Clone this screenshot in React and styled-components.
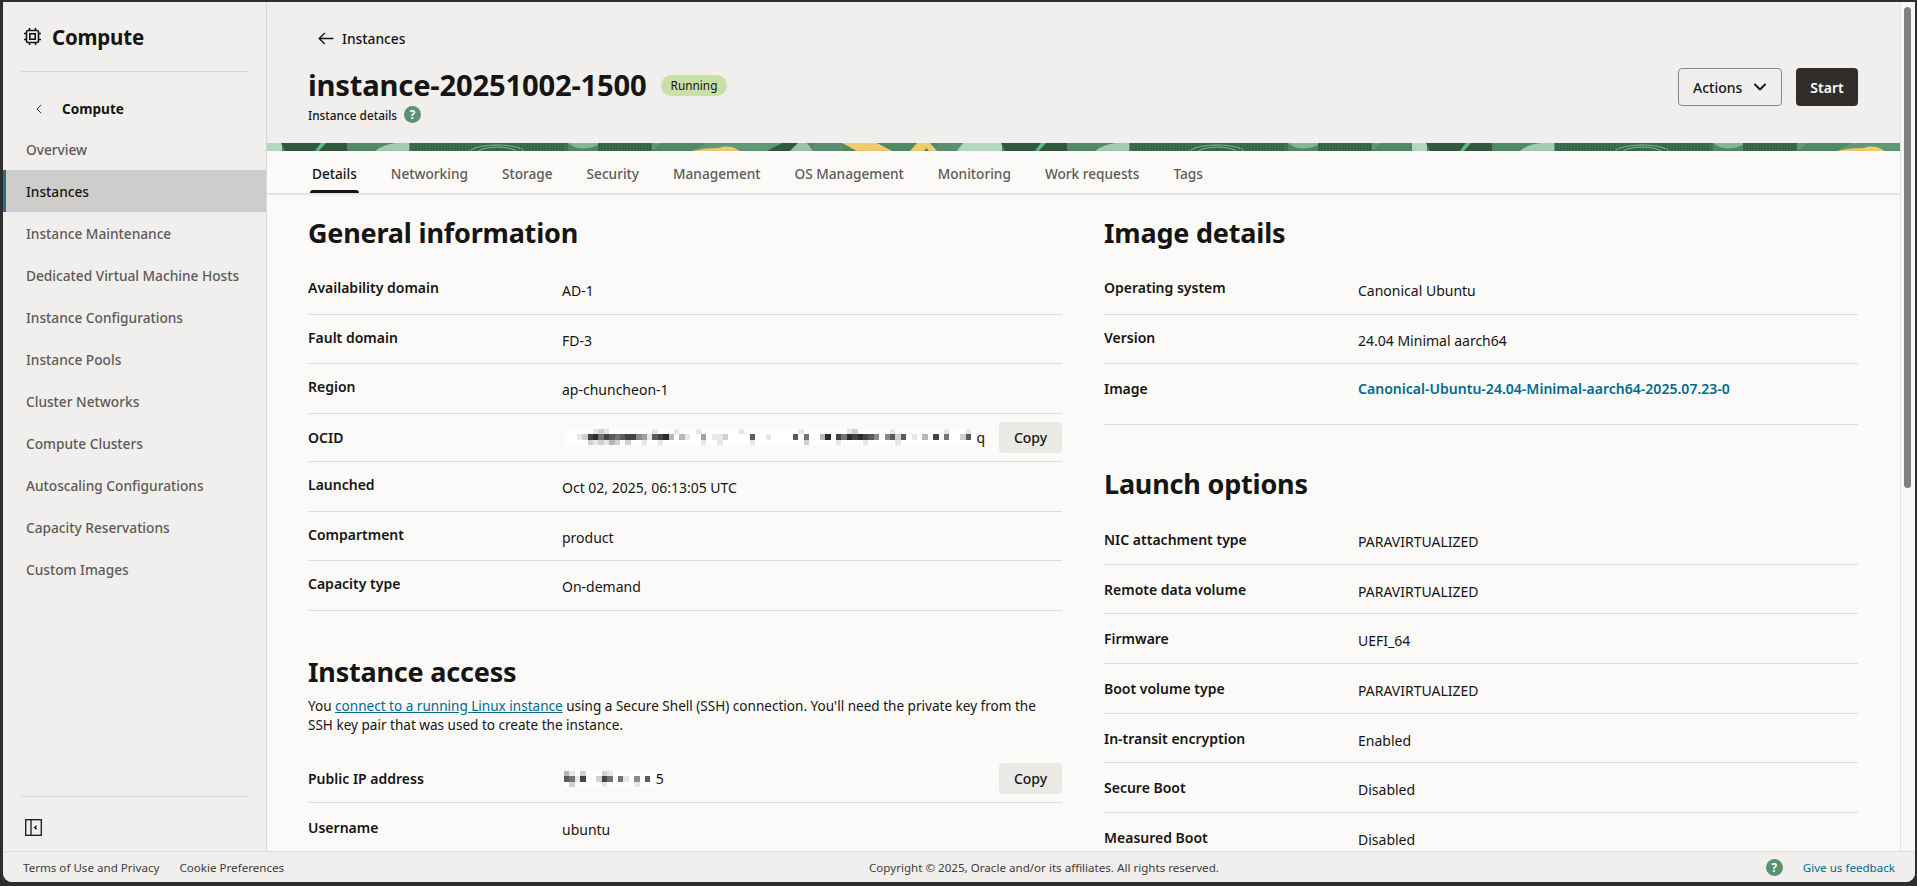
import React from "react";
import styled, { createGlobalStyle } from "styled-components";
import { ChevronDown, ChevronLeft } from "lucide-react";

const GlobalStyle = createGlobalStyle`
  html, body {
    margin: 0;
    height: 100%;
    overflow: hidden;
    background: #2f2e2c;
  }
  body {
    font-family: "Noto Sans", "Open Sans", sans-serif;
    color: #161513;
  }
  * {
    box-sizing: border-box;
  }
`;

const Frame = styled.div`
  width: 1917px;
  height: 886px;
  padding: 2px 2px 4px 3px;
  background: #2f2e2c;
`;

const Window = styled.div`
  height: 100%;
  display: flex;
  flex-direction: column;
  overflow: hidden;
  border-radius: 0 0 9px 9px;
  background: #f1efed;
`;

const Body = styled.div`
  flex: 1;
  min-height: 0;
  display: flex;
`;

const Sidebar = styled.aside`
  width: 264px;
  flex: none;
  display: flex;
  flex-direction: column;
  border-right: 1px solid #d9d7d4;
  background: #f1efed;
`;

const SideHeader = styled.div`
  height: 70px;
  margin: 0 18px;
  display: flex;
  align-items: center;
  gap: 10px;
  padding-left: 2px;
  border-bottom: 1px solid #d9d7d4;
`;

const SideTitle = styled.h1`
  margin: 0;
  font-size: 20.5px;
  font-weight: 700;
  letter-spacing: -0.2px;
`;

const BackRow = styled.div`
  height: 56px;
  padding: 17px 0 0 28px;
  display: flex;
  align-items: center;
  gap: 15px;
  font-size: 13.6px;
  font-weight: 700;
`;

const NavList = styled.nav`
  flex: 1;
`;

const NavItem = styled.div`
  height: 42px;
  display: flex;
  align-items: center;
  padding-left: ${(p) => (p.$active ? "20px" : "23px")};
  font-size: 13.7px;
  font-weight: 500;
  color: ${(p) => (p.$active ? "#161513" : "#5d5a57")};
  background: ${(p) => (p.$active ? "#cfcdcb" : "transparent")};
  border-left: ${(p) => (p.$active ? "3px solid #276f86" : "none")};
`;

const SideFooter = styled.div`
  margin: 0 18px;
  height: 55px;
  padding: 22px 0 0 4px;
  border-top: 1px solid #d9d7d4;
  line-height: 0;
`;

const Main = styled.main`
  flex: 1;
  min-width: 0;
  display: flex;
  flex-direction: column;
  overflow: hidden;
  background: #fbfaf8;
`;

const PageHeader = styled.header`
  height: 141px;
  flex: none;
  padding: 26px 42px 0 41px;
  display: flex;
  justify-content: space-between;
  background: #f1efed;
`;

const Crumb = styled.div`
  height: 20px;
  padding-left: 10px;
  display: flex;
  align-items: center;
  gap: 8px;
  font-size: 13.8px;
  font-weight: 500;
`;

const TitleRow = styled.div`
  margin-top: 16px;
  display: flex;
  align-items: center;
  gap: 14px;
`;

const PageTitle = styled.h2`
  margin: 0;
  font-size: 29.2px;
  line-height: 42px;
  font-weight: 700;
  letter-spacing: -0.2px;
`;

const Badge = styled.span`
  height: 21px;
  padding: 0 10px;
  display: inline-flex;
  align-items: center;
  border-radius: 11px;
  background: #c9dfa8;
  font-size: 11.8px;
`;

const SubTitle = styled.div`
  display: flex;
  align-items: center;
  gap: 7px;
  font-size: 11.8px;
  font-weight: 500;
`;

const HelpDot = styled.span`
  width: 17px;
  height: 17px;
  display: inline-flex;
  align-items: center;
  justify-content: center;
  border-radius: 50%;
  background: #5d9173;
  color: #fff;
  font-size: 11.5px;
  font-weight: 700;
`;

const HeaderActions = styled.div`
  margin-top: 40px;
  display: flex;
  gap: 14px;
`;

const ActionsButton = styled.button`
  width: 104px;
  height: 38px;
  padding: 0 11px 0 14px;
  display: flex;
  align-items: center;
  justify-content: space-between;
  border: 1px solid #8b8987;
  border-radius: 4px;
  background: transparent;
  color: #161513;
  font: 500 14px "Noto Sans", sans-serif;
`;

const StartButton = styled.button`
  width: 62px;
  height: 38px;
  border: 0;
  border-radius: 4px;
  background: #312d2a;
  color: #fff;
  font: 600 14px "Noto Sans", sans-serif;
`;

const BannerStrip = styled.svg`
  display: block;
  flex: none;
  width: 100%;
  height: 8px;
`;

const TabBar = styled.div`
  height: 42px;
  flex: none;
  padding-left: 45px;
  display: flex;
  gap: 34px;
  position: relative;
  z-index: 1;
  background: #fbfaf8;
  box-shadow: 0 1px 3px rgba(0, 0, 0, 0.18);
`;

const Tab = styled.div`
  position: relative;
  height: 100%;
  padding-top: 2px;
  display: flex;
  align-items: center;
  font-size: 13.65px;
  font-weight: 500;
  color: ${(p) => (p.$active ? "#161513" : "#5d5a57")};

  &::after {
    content: "";
    display: ${(p) => (p.$active ? "block" : "none")};
    position: absolute;
    left: -2px;
    right: -2px;
    bottom: 0;
    height: 3px;
    border-radius: 3px 3px 0 0;
    background: #161513;
  }
`;

const Columns = styled.div`
  flex: 1;
  min-height: 0;
  overflow: hidden;
  padding: 21px 42px 0 41px;
  display: grid;
  grid-template-columns: 754px 754px;
  column-gap: 42px;
`;

const Heading = styled.h3`
  margin: ${(p) => p.$gap || 0}px 0 ${(p) => p.$after || 13}px;
  height: 38px;
  font-size: 27px;
  line-height: 38px;
  font-weight: 700;
  letter-spacing: -0.2px;
`;

const Row = styled.div`
  height: ${(p) => (p.$copy ? "48px" : p.$tall ? "60.6px" : "49.7px")};
  padding-top: ${(p) => (p.$copy ? "0" : p.$low ? "15px" : "13px")};
  display: grid;
  grid-template-columns: 254px 1fr auto;
  align-items: ${(p) => (p.$copy ? "center" : "start")};
  border-bottom: 1px solid #dfdcd9;
  font-size: 14px;
  line-height: 20px;
`;

const Label = styled.div`
  font-weight: 600;
`;

const Value = styled.div`
  padding-top: ${(p) => (p.$flat ? "2px" : "3px")};
`;

const ValueLink = styled.a`
  color: #006b8f;
  font-size: 14.05px;
  font-weight: 600;
  text-decoration: none;
`;

const CopyButton = styled.button`
  width: 63px;
  height: 31px;
  border: 0;
  border-radius: 4px;
  background: #ebe9e6;
  color: #161513;
  font: 500 14px "Noto Sans", sans-serif;
`;

const Paragraph = styled.p`
  margin: 0 0 20px;
  font-size: 13.55px;
  line-height: 19px;

  a {
    color: #006b8f;
  }
`;

const RedactedRow = styled.div`
  display: flex;
  align-items: center;
  padding-left: ${(p) => p.$left}px;
`;

const Track = styled.div`
  width: 15px;
  flex: none;
  padding: 5px 4px 0 3px;
  border-left: 1px solid #e6e4e1;
  background: #f8f7f5;
`;

const Thumb = styled.div`
  height: 481px;
  border-radius: 4px;
  background: #7f7f7f;
`;

const Footer = styled.footer`
  height: 31px;
  flex: none;
  padding: 0 20px;
  display: grid;
  grid-template-columns: 846px auto 1fr;
  align-items: center;
  border-top: 1px solid #dfdcd9;
  background: #f1efed;
  font-size: 11.6px;
  color: #3f3c3a;
`;

const FooterLinks = styled.div`
  display: flex;
  gap: 20px;
`;

const FooterRight = styled.div`
  display: flex;
  justify-content: flex-end;
  align-items: center;
  gap: 20px;
  color: #006b8f;
`;

const tabs = [
  "Details",
  "Networking",
  "Storage",
  "Security",
  "Management",
  "OS Management",
  "Monitoring",
  "Work requests",
  "Tags",
];

const navItems = [
  "Overview",
  "Instances",
  "Instance Maintenance",
  "Dedicated Virtual Machine Hosts",
  "Instance Configurations",
  "Instance Pools",
  "Cluster Networks",
  "Compute Clusters",
  "Autoscaling Configurations",
  "Capacity Reservations",
  "Custom Images",
];

const generalInfo = [
  ["Availability domain", "AD-1"],
  ["Fault domain", "FD-3"],
  ["Region", "ap-chuncheon-1"],
];

const generalInfoRest = [
  ["Launched", "Oct 02, 2025, 06:13:05 UTC"],
  ["Compartment", "product"],
  ["Capacity type", "On-demand"],
];

const launchOptions = [
  ["NIC attachment type", "PARAVIRTUALIZED"],
  ["Remote data volume", "PARAVIRTUALIZED"],
  ["Firmware", "UEFI_64"],
  ["Boot volume type", "PARAVIRTUALIZED"],
  ["In-transit encryption", "Enabled"],
  ["Secure Boot", "Disabled"],
  ["Measured Boot", "Disabled"],
];

// redacted values, one digit per mosaic cell (0 = white, 9 = near black)
const ocidCells = [
  "0000012100000000100010001000000010000000000100000000120000001000000000100010",
  "0012896876788541789303100401120000700100007060039086989875057270103080600270",
  "0000212132020010010000000100100000100000000020000010000100000100000000000000",
];

const ipCells = [
  "31020002100000000",
  "76180028606105070",
  "02000001000001000",
];

const RedactedCells = ({ rows, cell }) => (
  <svg
    width={rows[0].length * cell}
    height={rows.length * cell}
    shapeRendering="crispEdges"
  >
    <rect width="100%" height="100%" fill="#fff" />
    {rows.map((row, y) =>
      [...row].map((c, x) => (
        <rect
          key={`${x}-${y}`}
          x={x * cell}
          y={y * cell}
          width={cell}
          height={cell}
          fill={`rgba(22,21,19,${Number(c) / 10})`}
        />
      ))
    )}
  </svg>
);

const ChipIcon = () => (
  <svg width="19" height="19" viewBox="0 0 19 19" fill="none" stroke="#161513" strokeWidth="1.6">
    <rect x="3.5" y="3.5" width="12" height="12" rx="1.5" />
    <rect x="6.8" y="6.8" width="5.4" height="5.4" />
    <path d="M6.5 1v2.5M12.5 1v2.5M6.5 15.5V18M12.5 15.5V18M1 6.5h2.5M1 12.5h2.5M15.5 6.5H18M15.5 12.5H18" />
  </svg>
);

const CollapseIcon = () => (
  <svg width="17" height="17" viewBox="0 0 17 17" fill="none" stroke="#161513" strokeWidth="1.3">
    <rect x="0.7" y="0.7" width="15.6" height="15.6" />
    <path d="M6 0.7v15.6" />
    <path d="M11.6 6.8 9.8 8.5l1.8 1.7" strokeWidth="1.5" />
  </svg>
);

const BackArrow = () => (
  <svg width="16" height="13" viewBox="0 0 16 13" fill="none" stroke="#161513" strokeWidth="1.4">
    <path d="M15.5 6.5H1.2M6.8 1 1.2 6.5 6.8 12" />
  </svg>
);

const fingerLines = Array.from({ length: 52 }, (_, i) => 143 + i * 3);
const fingerLinesB = Array.from({ length: 18 }, (_, i) => 332 + i * 3);

const BannerTile = () => (
  <g id="banner-tile">
    <rect width="720" height="8" fill="#4f8a63" />
    <rect x="0" width="15" height="8" fill="#b5d7c1" />
    <polygon points="14,0 54,0 48,8 18,8" fill="#30593f" />
    <polygon points="54,0 59,0 52,8 48,8" fill="#5cc07c" />
    <polygon points="59,0 80,0 80,8 52,8" fill="#30593f" />
    <path d="M108 8 Q120 -2 143 0 L143 8Z" fill="#a3cab3" />
    <rect x="143" width="158" height="8" fill="#3e7551" />
    {fingerLines.map((x) => (
      <path key={x} d={`M${x} 0v8`} stroke="#2c5c3d" strokeWidth="1" />
    ))}
    <ellipse cx="230" cy="10" rx="28" ry="8" fill="none" stroke="#86b598" />
    <ellipse cx="230" cy="10" rx="20" ry="6" fill="none" stroke="#86b598" />
    <path d="M301 0h30v2q-18 8-30-2Z" fill="#86b598" />
    <rect x="331" width="54" height="8" fill="#3a6e4c" />
    {fingerLinesB.map((x) => (
      <path key={x} d={`M${x} 0v8`} stroke="#2c5c3d" strokeWidth="1" />
    ))}
    <rect x="385" width="130" height="8" fill="#5f9975" />
    <polygon points="395,0 440,0 425,8 385,8" fill="#4f8a63" />
    <path d="M425 8 Q436 5 452 5 Q462 1 473 8Z" fill="#f2cb6a" />
    <polygon points="515,0 531,0 523,8 500,8" fill="#30593f" />
    <polygon points="531,0 540,0 546,8 523,8" fill="#9cc2ab" />
    <rect x="546" width="30" height="8" fill="#5c8f72" />
    <polygon points="575,0 610,0 625,8 590,8" fill="#f2cb6a" />
    <polygon points="655,0 663,0 670,8 662,8" fill="#f2cb6a" />
    <polygon points="663,0 657,8 643,8 650,0" fill="#f2cb6a" />
    <rect x="670" y="0" width="26" height="8" fill="#5c8f72" />
    <polygon points="696,0 720,0 720,8 690,8" fill="#b5d7c1" />
  </g>
);

const Banner = () => (
  <BannerStrip>
    <defs>
      <BannerTile />
    </defs>
    <use href="#banner-tile" x="0" />
    <use href="#banner-tile" x="720" />
    <use href="#banner-tile" x="1145" />
  </BannerStrip>
);

const App = () => {
  return (
    <>
      <GlobalStyle />
      <Frame>
        <Window>
          <Body>
            <Sidebar>
              <SideHeader>
                <ChipIcon />
                <SideTitle>Compute</SideTitle>
              </SideHeader>
              <BackRow>
                <ChevronLeft size={16} strokeWidth={1.5} color="#3f3c3a" />
                Compute
              </BackRow>
              <NavList>
                {navItems.map((item) => (
                  <NavItem key={item} $active={item === "Instances"}>
                    {item}
                  </NavItem>
                ))}
              </NavList>
              <SideFooter>
                <CollapseIcon />
              </SideFooter>
            </Sidebar>
            <Main>
              <PageHeader>
                <div>
                  <Crumb>
                    <BackArrow />
                    Instances
                  </Crumb>
                  <TitleRow>
                    <PageTitle>instance-20251002-1500</PageTitle>
                    <Badge>Running</Badge>
                  </TitleRow>
                  <SubTitle>
                    Instance details
                    <HelpDot>?</HelpDot>
                  </SubTitle>
                </div>
                <HeaderActions>
                  <ActionsButton>
                    Actions
                    <ChevronDown size={20} strokeWidth={2.4} />
                  </ActionsButton>
                  <StartButton>Start</StartButton>
                </HeaderActions>
              </PageHeader>
              <Banner />
              <TabBar>
                {tabs.map((tab) => (
                  <Tab key={tab} $active={tab === "Details"}>
                    {tab}
                  </Tab>
                ))}
              </TabBar>
              <Columns>
                <section>
                  <Heading>General information</Heading>
                  {generalInfo.map(([label, value]) => (
                    <Row key={label}>
                      <Label>{label}</Label>
                      <Value>{value}</Value>
                    </Row>
                  ))}
                  <Row $copy>
                    <Label>OCID</Label>
                    <RedactedRow $left={4}>
                      <RedactedCells rows={ocidCells} cell={5.4} />q
                    </RedactedRow>
                    <CopyButton>Copy</CopyButton>
                  </Row>
                  {generalInfoRest.map(([label, value]) => (
                    <Row key={label}>
                      <Label>{label}</Label>
                      <Value>{value}</Value>
                    </Row>
                  ))}
                  <Heading $gap={42} $after={6}>
                    Instance access
                  </Heading>
                  <Paragraph>
                    You <a href="#connect">connect to a running Linux instance</a> using a Secure
                    Shell (SSH) connection. You'll need the private key from the
                    <br />
                    SSH key pair that was used to create the instance.
                  </Paragraph>
                  <Row $copy>
                    <Label>Public IP address</Label>
                    <RedactedRow $left={2}>
                      <RedactedCells rows={ipCells} cell={5.4} />5
                    </RedactedRow>
                    <CopyButton>Copy</CopyButton>
                  </Row>
                  <Row $low>
                    <Label>Username</Label>
                    <Value $flat>ubuntu</Value>
                  </Row>
                </section>
                <section>
                  <Heading>Image details</Heading>
                  <Row>
                    <Label>Operating system</Label>
                    <Value>Canonical Ubuntu</Value>
                  </Row>
                  <Row>
                    <Label>Version</Label>
                    <Value>24.04 Minimal aarch64</Value>
                  </Row>
                  <Row $tall $low>
                    <Label>Image</Label>
                    <ValueLink href="#image">Canonical-Ubuntu-24.04-Minimal-aarch64-2025.07.23-0</ValueLink>
                  </Row>
                  <Heading $gap={40} $after={12}>
                    Launch options
                  </Heading>
                  {launchOptions.map(([label, value]) => (
                    <Row key={label} $low>
                      <Label>{label}</Label>
                      <Value $flat>{value}</Value>
                    </Row>
                  ))}
                </section>
              </Columns>
            </Main>
            <Track>
              <Thumb />
            </Track>
          </Body>
          <Footer>
            <FooterLinks>
              <span>Terms of Use and Privacy</span>
              <span>Cookie Preferences</span>
            </FooterLinks>
            <span>Copyright © 2025, Oracle and/or its affiliates. All rights reserved.</span>
            <FooterRight>
              <HelpDot>?</HelpDot>
              <span>Give us feedback</span>
            </FooterRight>
          </Footer>
        </Window>
      </Frame>
    </>
  );
};

export default App;
